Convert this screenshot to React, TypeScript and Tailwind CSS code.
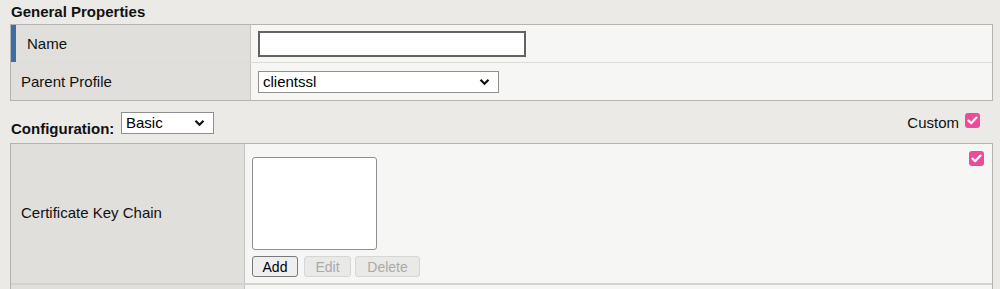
import React from "react";

const Chevron = () => (
  <svg width="11" height="8" viewBox="0 0 11 8" className="shrink-0">
    <path d="M1.5 1.8 L5.5 5.8 L9.5 1.8" fill="none" stroke="#111" strokeWidth="2.2" />
  </svg>
);

const PinkCheck = () => (
  <div className="flex h-[15px] w-[15px] items-center justify-center rounded-[3px] bg-[#ec4b99]">
    <svg width="11" height="9" viewBox="0 0 11 9">
      <path d="M1.5 4.6 L4.2 7.2 L9.5 1.6" fill="none" stroke="#fff" strokeWidth="2.2" strokeLinecap="round" strokeLinejoin="round" />
    </svg>
  </div>
);

const FakeSelect = ({ value, className }: { value: string; className: string }) => (
  <div
    className={`flex items-center justify-between border border-[#8f8f8f] bg-white pl-[4px] pr-[8px] text-[15px] leading-[18px] text-black ${className}`}
  >
    <span>{value}</span>
    <Chevron />
  </div>
);

const Btn = ({ label, disabled, className }: { label: string; disabled?: boolean; className: string }) => (
  <div
    className={`flex h-[21px] items-center justify-center rounded-[3px] border text-[14px] leading-[16px] ${
      disabled
        ? "border-[#d6d6d6] bg-[#e9e9e8] text-[#a9a9a9]"
        : "border-[#7a7a7a] bg-[#efefef] text-black"
    } ${className}`}
  >
    {label}
  </div>
);

export default function App() {
  return (
    <div className="h-[289px] w-[1000px] overflow-hidden bg-[#ebeae6] font-['Liberation_Sans',Arial,sans-serif] text-[#111]">
      <div className="h-[24px] pl-[11px] pt-[3px] text-[15px] font-bold leading-[18px]">
        General Properties
      </div>

      <div className="ml-[10px] w-[983px] border border-[#b3b3b1]">
        <div className="grid h-[38px] grid-cols-[240px_1fr] border-b border-[#dcdbd8]">
          <div className="flex items-center border-l-[5px] border-r border-l-[#3c6ea6] border-r-[#c6c5c2] bg-[#e0dfdc] pl-[11px] pt-[2px] text-[15px]">
            Name
          </div>
          <div className="flex items-center bg-[#f6f6f4] pl-[7px]">
            <div className="h-[26px] w-[268px] border-2 border-[#626262] bg-white" />
          </div>
        </div>
        <div className="grid h-[37px] grid-cols-[240px_1fr]">
          <div className="flex items-center border-r border-[#c6c5c2] bg-[#e0dfdc] pl-[10px] pt-[1px] text-[15px]">
            Parent Profile
          </div>
          <div className="flex items-center bg-[#f6f6f4] pl-[7px]">
            <FakeSelect value="clientssl" className="h-[22px] w-[241px]" />
          </div>
        </div>
      </div>

      <div className="flex h-[42px] justify-between pl-[11px]">
        <div className="flex items-start">
          <span className="mt-[19px] w-[110px] whitespace-nowrap text-[15px] font-bold leading-[18px]">Configuration:</span>
          <FakeSelect value="Basic" className="mt-[11px] h-[22px] w-[93px]" />
        </div>
        <div className="mr-[20px] flex items-start gap-[6px]">
          <span className="mt-[13px] text-[15px] leading-[18px]">Custom</span>
          <div className="mt-[12px]">
            <PinkCheck />
          </div>
        </div>
      </div>

      <div className="ml-[10px] w-[983px] border border-[#b3b3b1]">
        <div className="grid h-[141px] grid-cols-[234px_1fr] border-b-2 border-[#d3d2cf]">
          <div className="flex items-center border-r border-[#c6c5c2] bg-[#e0dfdc] pl-[10px] text-[15px]">
            Certificate Key Chain
          </div>
          <div className="flex justify-between bg-[#f6f6f4] pl-[7px]">
            <div className="pt-[13px]">
              <div className="h-[93px] w-[125px] rounded-[3px] border border-[#8f8f8f] bg-white" />
              <div className="mt-[6px] flex">
                <Btn label="Add" className="w-[46px]" />
                <Btn label="Edit" disabled className="ml-[6px] w-[47px]" />
                <Btn label="Delete" disabled className="ml-[4px] w-[65px]" />
              </div>
            </div>
            <div className="mr-[8px] mt-[7px]">
              <PinkCheck />
            </div>
          </div>
        </div>
        <div className="grid h-[30px] grid-cols-[234px_1fr]">
          <div className="border-r border-[#c6c5c2] bg-[#e0dfdc]" />
          <div className="bg-[#f6f6f4]" />
        </div>
      </div>
    </div>
  );
}
